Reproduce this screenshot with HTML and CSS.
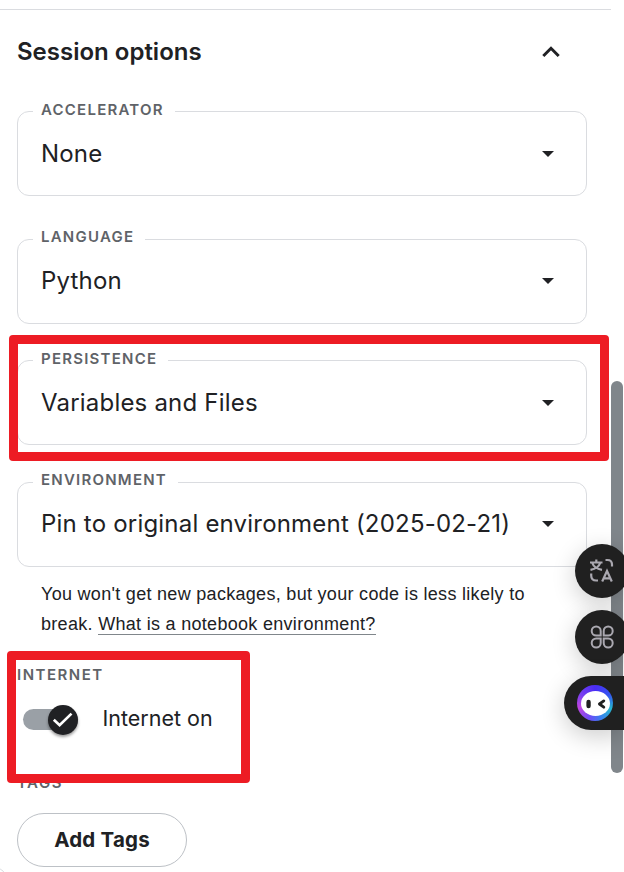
FILE: index.html
```html
<!DOCTYPE html>
<html lang="en">
<head>
<meta charset="utf-8">
<title>Session options</title>
<link rel="stylesheet" href="styles.css">
</head>
<body>
<main class="panel">
  <header class="panel-header">
    <h2>Session options</h2>
    <svg class="chevron" width="20" height="14" viewBox="0 0 20 14"><path d="M2.300 11 10 3.300 17.700 11" fill="none" stroke="#202124" stroke-width="3"/></svg>
  </header>
  <div class="fields">
    <fieldset class="field accelerator">
      <legend>ACCELERATOR</legend>
      <span>None</span><i class="caret"></i>
    </fieldset>
    <fieldset class="field language">
      <legend>LANGUAGE</legend>
      <span>Python</span><i class="caret"></i>
    </fieldset>
    <fieldset class="field persistence">
      <legend>PERSISTENCE</legend>
      <span>Variables and Files</span><i class="caret"></i>
    </fieldset>
    <fieldset class="field environment">
      <legend>ENVIRONMENT</legend>
      <span>Pin to original environment (2025-02-21)</span><i class="caret"></i>
    </fieldset>
  </div>
  <p class="help">You won't get new packages, but your code is less likely to<br>break. <a>What is a notebook environment?</a></p>
  <section class="internet">
    <h3>INTERNET</h3>
    <div class="switch-row">
      <div class="track"><div class="thumb"><svg width="30" height="30" viewBox="0 0 30 30"><path d="m5.800 14.800 5.800 5.400L23.500 8.600" fill="none" stroke="#fff" stroke-width="2.700"/></svg></div></div>
      <span>Internet on</span>
    </div>
  </section>
  <section class="tags">
    <h3>TAGS</h3>
    <button>Add Tags</button>
  </section>
</main>
<div class="scrollbar"></div>
<div class="corner"></div>
<div class="mark mark-persistence"></div>
<div class="mark mark-internet"></div>
<aside class="tools">
  <div class="tool">
    <svg width="26" height="26" viewBox="0 0 26 26" fill="none" stroke="#aaa8b0" stroke-width="2.200"><path d="M1 4.500h12.500M7.300 1.500v3M3.300 5c1 3 4 5.800 9.700 6.800M11.200 5c-1 3-4 5.800-9.700 6.800"/><path d="M16.500 2h2q4.500 0 4.500 4.500V8.500M2.200 15.500v2q0 5 5 5H9"/><path d="m13.200 23.500 4.800-10.500 4.800 10.500M15 20.300h6"/></svg>
  </div>
  <div class="tool">
    <svg width="26" height="26" viewBox="0 0 26 26" fill="none" stroke="#aaa8b0" stroke-width="2"><path d="M11.700 11.500H7.200a4.500 4.500 0 1 1 4.500-4.500zM14.700 11.500V7a4.500 4.500 0 1 1 4.500 4.500zM11.700 14.500V19a4.500 4.500 0 1 1-4.500-4.500zM14.700 14.500h4.500a4.500 4.500 0 1 1-4.500 4.500z"/></svg>
  </div>
  <div class="tool assistant">
    <div class="orb"><svg width="29" height="25" viewBox="0 0 28 24"><ellipse cx="14" cy="12" rx="14" ry="12" fill="#fff"/><path d="M7.300 10.500v4" stroke="#202020" stroke-width="4.200" stroke-linecap="round"/><path d="m22 9.500-4.200 3 4.200 3" fill="none" stroke="#202020" stroke-width="2.800" stroke-linecap="round" stroke-linejoin="round"/></svg></div>
  </div>
</aside>
</body>
</html>
```
FILE: styles.css
```css
* { box-sizing: border-box; }
body {
  margin: 0;
  position: relative;
  width: 624px;
  height: 872px;
  overflow: hidden;
  background: #fff;
  color: #202124;
  font-family: Inter, "Liberation Sans", sans-serif;
}
h2, h3, p { margin: 0; }
.panel {
  width: 611px;
  margin-top: 9px;
  border-top: 1px solid #dadce0;
  padding: 0 24px 0 17px;
}
.panel-header {
  display: flex;
  align-items: center;
  justify-content: space-between;
  height: 84px;
  padding-right: 26px;
}
.panel-header h2 { font-size: 24px; font-weight: 600; line-height: 30px; }
.fields { display: flex; flex-direction: column; padding-top: 7px; }
.field {
  display: flex;
  align-items: center;
  justify-content: space-between;
  width: 570px;
  height: 95px;
  margin: 0;
  padding: 18px 32px 0 15px;
  border: 1px solid #dadce0;
  border-radius: 12px;
}
.field legend {
  height: 20px;
  padding: 0 11px 0 8px;
  font-size: 15px;
  font-weight: 600;
  line-height: 18px;
  letter-spacing: 1.230px;
  color: #5f6368;
}
.field span { padding-left: 8px; font-size: 24px; line-height: 30px; letter-spacing: .2px; white-space: nowrap; }
.language { margin-top: 33px; }
.persistence { margin-top: 26px; }
.environment { margin-top: 27px; }
.language legend, .environment legend { line-height: 16px; }
.language, .environment { padding-top: 17px; }
.caret { border: 6.500px solid transparent; border-top-color: #202124; border-bottom: 0; }
.help {
  padding: 12px 0 0 24px;
  font-family: "Liberation Sans", Arial, sans-serif;
  font-size: 18px;
  line-height: 30px;
  letter-spacing: .3px;
  white-space: nowrap;
}
.help a { border-bottom: 1px solid #80868b; }
h3 { font-size: 15px; font-weight: 600; line-height: 20px; letter-spacing: 1.500px; color: #5f6368; }
.internet { padding-top: 26px; }
.switch-row { display: flex; align-items: center; height: 30px; margin: 19.500px 0 .5px; padding-left: 6px; }
.track { display: flex; align-items: center; justify-content: flex-end; width: 54.500px; height: 21px; border-radius: 11px; background: #9aa0a6; }
.thumb { flex: none; width: 30px; height: 30px; border-radius: 50%; background: #202124; box-shadow: 0 2px 3px #0006; }
.thumb svg { display: block; }
.switch-row span { margin-left: 25px; padding-bottom: 4px; font-size: 21.500px; }
.tags { padding-top: 38px; }
.tags button {
  display: block;
  width: 170px;
  height: 54px;
  margin-top: 20px;
  padding: 0 6px 2px;
  border: 1px solid #bdc1c6;
  border-radius: 27px;
  background: #fff;
  color: #202124;
  font: 700 20.500px Inter, sans-serif;
  letter-spacing: .2px;
}
.scrollbar { position: absolute; left: 611px; top: 381px; width: 12px; height: 392px; border-radius: 6px; background: #80868b; }
.corner { position: absolute; left: -12px; top: 868px; width: 18px; height: 18px; border: 1px solid #dadce0; border-radius: 9px; }
.mark { position: absolute; border: 9px solid #ed1c24; border-radius: 4px; }
.mark-persistence { left: 9px; top: 335px; width: 600px; height: 126px; }
.mark-internet { left: 7px; top: 651px; width: 243px; height: 132px; }
.tools { position: absolute; right: 0; top: 544px; display: flex; flex-direction: column; align-items: flex-end; gap: 12px; }
.tool {
  display: flex;
  align-items: center;
  width: 54px;
  height: 54px;
  margin-right: -5px;
  padding-left: 14px;
  border-radius: 50%;
  background: #202020;
  box-shadow: 0 6px 24px #0003;
}
.assistant { width: 60px; margin-right: 0; padding-left: 13px; border-radius: 27px 0 0 27px; }
.orb {
  display: flex;
  align-items: center;
  justify-content: center;
  width: 36px;
  height: 36px;
  border-radius: 50%;
  background: conic-gradient(#4a2cf5, #3454f0 60deg, #26b6cf 110deg, #3a7cf0 160deg, #6d4cf5 200deg, #c044e0 255deg, #7a40f0 300deg, #4a2cf5);
}
```
